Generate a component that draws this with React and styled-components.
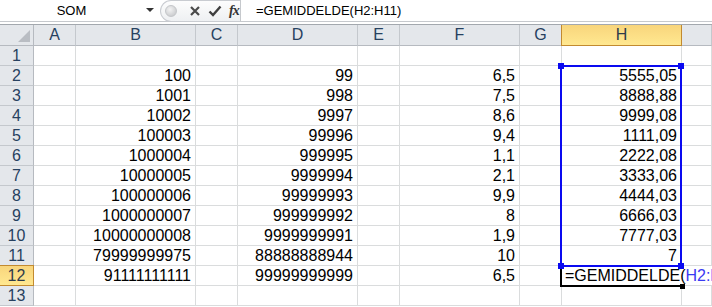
import React from 'react';
import styled, { createGlobalStyle } from 'styled-components';

const GlobalStyle = createGlobalStyle`
    html, body {
        margin: 0;
        padding: 0;
        background: #ffffff;
        font-family: "Liberation Sans", Arial, sans-serif;
        overflow: hidden;
    }
`;

// I is only partly on screen, so its letter sits out of view
const COLS = [
    { key: 'A', width: 42 },
    { key: 'B', width: 120 },
    { key: 'C', width: 42 },
    { key: 'D', width: 120 },
    { key: 'E', width: 42 },
    { key: 'F', width: 120 },
    { key: 'G', width: 42 },
    { key: 'H', width: 120 },
    { key: 'I', width: 30, hidden: true },
];

const ROWS = [
    {},
    { B: '100', D: '99', F: '6,5', H: '5555,05' },
    { B: '1001', D: '998', F: '7,5', H: '8888,88' },
    { B: '10002', D: '9997', F: '8,6', H: '9999,08' },
    { B: '100003', D: '99996', F: '9,4', H: '1111,09' },
    { B: '1000004', D: '999995', F: '1,1', H: '2222,08' },
    { B: '10000005', D: '9999994', F: '2,1', H: '3333,06' },
    { B: '100000006', D: '99999993', F: '9,9', H: '4444,03' },
    { B: '1000000007', D: '999999992', F: '8', H: '6666,03' },
    { B: '10000000008', D: '9999999991', F: '1,9', H: '7777,03' },
    { B: '79999999975', D: '88888888944', F: '10', H: '7' },
    { B: '91111111111', D: '99999999999', F: '6,5' },
    {},
];

const ACTIVE_ROW = 12;
const ACTIVE_COL = 'H';

const FormulaBar = styled.div`
    display: flex;
    height: 21px;
    border-bottom: 1px solid #c6c9cd;
    font-size: 13px;
    color: #000;
`;

const NameBox = styled.div`
    width: 157px;
    display: flex;
    align-items: center;
    position: relative;
    padding-right: 14px;
    box-sizing: border-box;
    justify-content: center;
`;

const DropArrow = styled.span`
    position: absolute;
    right: 3px;
    top: 8px;
    width: 0;
    height: 0;
    border-left: 4px solid transparent;
    border-right: 4px solid transparent;
    border-top: 4px solid #333;
`;

const Buttons = styled.div`
    width: 80px;
    display: flex;
    align-items: center;
    gap: 7px;
    padding-left: 4px;
    box-sizing: border-box;
    border: 1px solid #c9ccd1;
    border-right: none;
    border-radius: 11px 0 0 11px;
    background: linear-gradient(#fdfdfd, #eef0f2);
    margin: 0 0 -1px 3px;
`;

const Knob = styled.span`
    width: 10px;
    height: 10px;
    border-radius: 50%;
    background: radial-gradient(circle at 40% 35%, #f3f3f3, #bfc1c4);
    border: 1px solid #c4c6c9;
    margin-right: 5px;
`;

const Fx = styled.span`
    font-family: "Liberation Serif", serif;
    font-style: italic;
    font-weight: bold;
    font-size: 14px;
    color: #333;
    letter-spacing: -1px;
`;

const FormulaInput = styled.div`
    flex: 1;
    display: flex;
    align-items: center;
    padding-left: 15px;
    border-left: 1px solid #c6c9cd;
    white-space: nowrap;
`;

const BarGap = styled.div`
    height: 2px;
    border-bottom: 1px solid #a3a8ae;
`;

const Sheet = styled.div`
    position: relative;
    display: grid;
    grid-template-columns: 34px ${COLS.map((c) => c.width + 'px').join(' ')};
    grid-auto-rows: 20px;
    grid-template-rows: 21px;
    font-size: 16px;
    overflow: hidden;
`;

const Corner = styled.div`
    position: relative;
    background: #e4e7eb;
    border-right: 1px solid #b6bac0;
    border-bottom: 1px solid #b6bac0;
    box-sizing: border-box;

    &::after {
        content: '';
        position: absolute;
        right: 3px;
        bottom: 3px;
        width: 0;
        height: 0;
        border-left: 12px solid transparent;
        border-bottom: 12px solid #b9bdc3;
    }
`;

const ColHeader = styled.div`
    display: flex;
    align-items: center;
    justify-content: center;
    box-sizing: border-box;
    color: ${(p) => (p.$active ? '#2e3b4a' : '#27415f')};
    background: ${(p) =>
        p.$active ? 'linear-gradient(#f8d57c, #ffe890)' : '#e4e7eb'};
    border-right: 1px solid ${(p) => (p.$active ? '#c28a30' : '#c4c8cd')};
    border-bottom: 1px solid ${(p) => (p.$active ? '#c28a30' : '#b6bac0')};
    ${(p) => p.$active && 'border-left: 1px solid #c28a30; margin-left: -1px;'}
`;

const RowHeader = styled.div`
    display: flex;
    align-items: center;
    justify-content: center;
    box-sizing: border-box;
    color: ${(p) => (p.$active ? '#2e3b4a' : '#27415f')};
    background: ${(p) =>
        p.$active ? 'linear-gradient(#f8d57c, #ffe890)' : '#e4e7eb'};
    border-right: 1px solid ${(p) => (p.$active ? '#c28a30' : '#b6bac0')};
    border-bottom: 1px solid ${(p) => (p.$active ? '#c28a30' : '#c4c8cd')};
    ${(p) => p.$active && 'border-top: 1px solid #c28a30; margin-top: -1px;'}
`;

const Cell = styled.div`
    display: flex;
    align-items: center;
    justify-content: flex-end;
    padding-right: 4px;
    box-sizing: border-box;
    border-right: ${(p) => (p.$open ? 'none' : '1px solid #dadcdd')};
    border-bottom: 1px solid #dadcdd;
    white-space: nowrap;
    color: #000;
`;

const EditCell = styled.div`
    position: relative;
    z-index: 2;
    display: flex;
    align-items: center;
    box-sizing: border-box;
    margin: -1px 0 -1px -2px;
    padding-left: 3px;
    border-top: 2px solid #f2f200;
    border-left: 2px solid #000;
    border-bottom: 2px solid #000;
    background: #fff;
    white-space: nowrap;
    overflow: visible;

    &::after {
        content: '';
        position: absolute;
        right: -3px;
        bottom: -4px;
        width: 5px;
        height: 5px;
        background: #000;
    }
`;

const EditText = styled.span`
    background: #fff;
    padding-right: 20px;
`;

const RefText = styled.span`
    color: #3a3af2;
`;

const Selection = styled.div`
    position: absolute;
    box-sizing: border-box;
    border: 2px solid #0a0af0;
    pointer-events: none;
    z-index: 3;
`;

const Handle = styled.span`
    position: absolute;
    width: 6px;
    height: 6px;
    background: #0a0af0;
    ${(p) => (p.$top ? 'top: -4px;' : 'bottom: -4px;')}
    ${(p) => (p.$left ? 'left: -4px;' : 'right: -4px;')}
`;

const XIcon = () => (
    <svg width="12" height="12" viewBox="0 0 12 12">
        <path d="M2 2 L10 10 M10 2 L2 10" stroke="#4a4a4a" strokeWidth="2.2" />
    </svg>
);

const CheckIcon = () => (
    <svg width="14" height="12" viewBox="0 0 14 12">
        <path d="M1.5 6.5 L5 10 L12.5 1.5" stroke="#3f3f3f" strokeWidth="2.4" fill="none" />
    </svg>
);

export default function App() {
    const colLeft = (key) => {
        let x = 34;
        for (const c of COLS) {
            if (c.key === key) return x;
            x += c.width;
        }
        return x;
    };
    const hLeft = colLeft('H');

    return (
        <>
            <GlobalStyle />
            <FormulaBar>
                <NameBox>
                    SOM
                    <DropArrow />
                </NameBox>
                <Buttons>
                    <Knob />
                    <XIcon />
                    <CheckIcon />
                    <Fx>fx</Fx>
                </Buttons>
                <FormulaInput>=GEMIDDELDE(H2:H11)</FormulaInput>
            </FormulaBar>
            <BarGap />
            <Sheet>
                <Corner />
                {COLS.map((c) => (
                    <ColHeader key={c.key} $active={c.key === ACTIVE_COL}>
                        {c.hidden ? '' : c.key}
                    </ColHeader>
                ))}
                {ROWS.map((row, i) => {
                    const n = i + 1;
                    return (
                        <React.Fragment key={n}>
                            <RowHeader $active={n === ACTIVE_ROW}>{n}</RowHeader>
                            {COLS.map((c) =>
                                n === ACTIVE_ROW && c.key === ACTIVE_COL ? (
                                    <EditCell key={c.key}>
                                        <EditText>
                                            =GEMIDDELDE(<RefText>H2:H11)</RefText>
                                        </EditText>
                                    </EditCell>
                                ) : (
                                    <Cell key={c.key} $open={n === ACTIVE_ROW && c.key === 'I'}>
                                        {row[c.key]}
                                    </Cell>
                                )
                            )}
                        </React.Fragment>
                    );
                })}
                <Selection
                    style={{
                        left: hLeft - 2,
                        top: 21 + 20 - 1,
                        width: 122,
                        height: 20 * 10 + 2,
                    }}
                >
                    <Handle $top $left />
                    <Handle $top />
                    <Handle $left />
                    <Handle />
                </Selection>
            </Sheet>
        </>
    );
}
